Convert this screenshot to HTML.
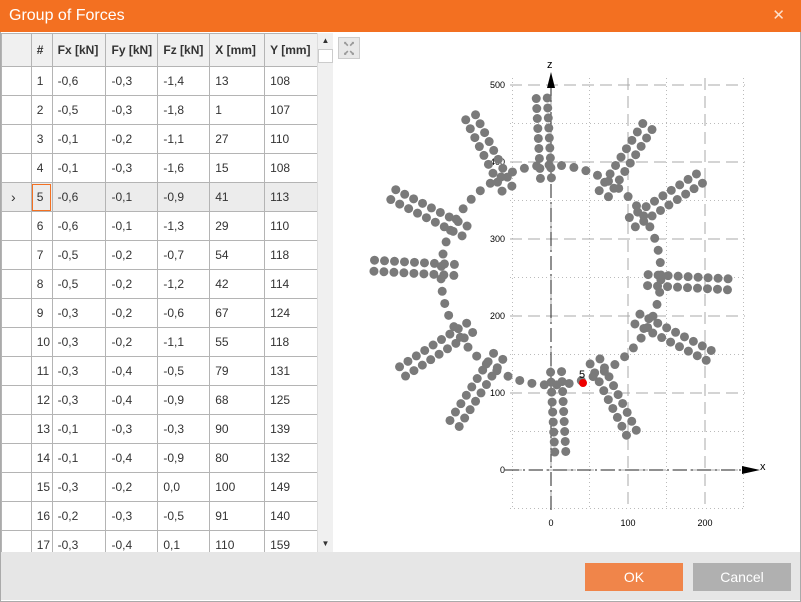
<!DOCTYPE html>
<html><head><meta charset="utf-8"><style>
*{box-sizing:border-box}
body{margin:0;width:801px;height:602px;overflow:hidden;background:#fff;font-family:"Liberation Sans",sans-serif;position:relative}
.title{position:absolute;left:0;top:0;width:801px;height:32px;background:#f37021;color:#fff;font-size:16px;line-height:32px;padding-left:9px}
.close{position:absolute;right:16px;top:0;font-size:15px;color:#fde0cc}
.win{position:absolute;left:0;top:32px;width:801px;height:570px;border:1px solid #aaa;border-top:none}
table{position:absolute;left:1px;top:0;border-collapse:collapse;font-size:12px;color:#333}
td,th{border:1px solid #b4b4b4;height:29px;padding:0 0 0 5px;text-align:left;white-space:nowrap}
th{height:33px;background:#f0f0f0;font-weight:bold}
tr.sel td{background:#ececec}
.clip{position:absolute;left:0;top:33px;width:318px;height:519px;overflow:hidden}
.sb{position:absolute;left:317px;top:33px;width:16px;height:519px;background:#f0f0f0;border-left:1px solid #ddd}
.bot{position:absolute;left:1px;top:552px;width:799px;height:48px;background:#e6e6e6}
.btn{position:absolute;top:11px;width:98px;height:28px;color:#fff;font-size:14px;text-align:center;line-height:28px}
</style></head><body>
<div class="title">Group of Forces<span class="close">✕</span></div>
<div class="win"></div>
<div class="clip"><table>
<colgroup><col style="width:30px"><col style="width:21px"><col style="width:54px"><col style="width:52px"><col style="width:52px"><col style="width:55px"><col style="width:53px"></colgroup>
<tr><th></th><th>#</th><th>Fx [kN]</th><th>Fy [kN]</th><th>Fz [kN]</th><th>X [mm]</th><th>Y [mm]</th></tr>
<tr><td></td><td>1</td><td>-0,6</td><td>-0,3</td><td>-1,4</td><td>13</td><td>108</td></tr>
<tr><td></td><td>2</td><td>-0,5</td><td>-0,3</td><td>-1,8</td><td>1</td><td>107</td></tr>
<tr><td></td><td>3</td><td>-0,1</td><td>-0,2</td><td>-1,1</td><td>27</td><td>110</td></tr>
<tr><td></td><td>4</td><td>-0,1</td><td>-0,3</td><td>-1,6</td><td>15</td><td>108</td></tr>
<tr class="sel"><td style="padding-left:9px;font-size:14px">›</td><td style="outline:1px solid #f37021;outline-offset:-2px">5</td><td>-0,6</td><td>-0,1</td><td>-0,9</td><td>41</td><td>113</td></tr>
<tr><td></td><td>6</td><td>-0,6</td><td>-0,1</td><td>-1,3</td><td>29</td><td>110</td></tr>
<tr><td></td><td>7</td><td>-0,5</td><td>-0,2</td><td>-0,7</td><td>54</td><td>118</td></tr>
<tr><td></td><td>8</td><td>-0,5</td><td>-0,2</td><td>-1,2</td><td>42</td><td>114</td></tr>
<tr><td></td><td>9</td><td>-0,3</td><td>-0,2</td><td>-0,6</td><td>67</td><td>124</td></tr>
<tr><td></td><td>10</td><td>-0,3</td><td>-0,2</td><td>-1,1</td><td>55</td><td>118</td></tr>
<tr><td></td><td>11</td><td>-0,3</td><td>-0,4</td><td>-0,5</td><td>79</td><td>131</td></tr>
<tr><td></td><td>12</td><td>-0,3</td><td>-0,4</td><td>-0,9</td><td>68</td><td>125</td></tr>
<tr><td></td><td>13</td><td>-0,1</td><td>-0,3</td><td>-0,3</td><td>90</td><td>139</td></tr>
<tr><td></td><td>14</td><td>-0,1</td><td>-0,4</td><td>-0,9</td><td>80</td><td>132</td></tr>
<tr><td></td><td>15</td><td>-0,3</td><td>-0,2</td><td>0,0</td><td>100</td><td>149</td></tr>
<tr><td></td><td>16</td><td>-0,2</td><td>-0,3</td><td>-0,5</td><td>91</td><td>140</td></tr>
<tr><td></td><td>17</td><td>-0,3</td><td>-0,4</td><td>0,1</td><td>110</td><td>159</td></tr>
</table></div>
<div class="sb"><div style="height:16px;text-align:center;font-size:8px;line-height:16px;color:#333">▲</div><div style="background:#fff;border:1px solid #ccc;height:14px;width:15px"></div><div style="position:absolute;bottom:0;width:15px;height:16px;text-align:center;font-size:8px;line-height:16px;color:#333">▼</div></div>
<div style="position:absolute;left:338px;top:37px;width:22px;height:22px;background:#e8e8e8;border:1px solid #ccc;font-size:7px;color:#999;text-align:center;line-height:9px;padding-top:2px">⬉⬈<br>⬋⬊</div>
<svg id="ch" style="position:absolute;left:0;top:0" width="801" height="602" font-family="Liberation Sans" font-size="9"></svg>
<div class="bot"><div class="btn" style="left:584px;background:#f0854a">OK</div><div class="btn" style="left:692px;background:#b0b0b0">Cancel</div></div>
<script>
var s=document.getElementById('ch'),h='';
var X=function(v){return 551+v*0.77},Z=function(v){return 470-v*0.77};
for(var v=-50;v<=250;v+=50){var x=X(v);h+='<line x1="'+x+'" y1="78" x2="'+x+'" y2="510" stroke="'+(v%100?'#bbb':'#aaa')+'" stroke-dasharray="'+(v%100?'1,3':'12,6')+'"/>';}
for(var v=-50;v<=500;v+=50){var y=Z(v);h+='<line x1="510" y1="'+y+'" x2="745" y2="'+y+'" stroke="'+(v%100?'#bbb':'#aaa')+'" stroke-dasharray="'+(v%100?'1,3':'12,6')+'"/>';}
h+='<line x1="551" y1="88" x2="551" y2="512" stroke="#222" stroke-dasharray="14,4,2,4"/><line x1="505" y1="470" x2="745" y2="470" stroke="#222" stroke-dasharray="14,4,2,4"/>';
h+='<polygon points="547,88 555,88 551,72" fill="#000"/><polygon points="742,466 742,474 760,470" fill="#000"/>';
h+='<text x="547" y="68" font-size="11">z</text><text x="760" y="470" font-size="11">x</text>';
[0,100,200,300,400,500].forEach(function(v){h+='<text x="505" y="'+(Z(v)+3)+'" text-anchor="end">'+v+'</text>';});
[0,100,200].forEach(function(v){h+='<text x="'+X(v)+'" y="526" text-anchor="middle">'+v+'</text>';});
var cx=551,cy=275,R=110;
for(var a=0;a<360;a+=6.5){var r=a*Math.PI/180;h+='<circle cx="'+(cx+R*Math.cos(r))+'" cy="'+(cy-R*Math.sin(r))+'" r="4.5" fill="#7a7a7a"/>';}
for(var k=0;k<12;k++){var r=(90-k*30+(k%2?-3:3))*Math.PI/180,c=Math.cos(r),sn=Math.sin(r);
 for(var j=0;j<9;j++){var d=97+j*10;[-5.5,5.5].forEach(function(o){var px=cx+d*c-o*sn,py=cy-d*sn-o*c;h+='<circle cx="'+px+'" cy="'+py+'" r="4.5" fill="#7a7a7a"/>';});}}
h+='<circle cx="583" cy="383" r="4" fill="#e00"/><text x="579" y="378" font-size="11">5</text>';
s.innerHTML=h;
</script>
</body></html>
